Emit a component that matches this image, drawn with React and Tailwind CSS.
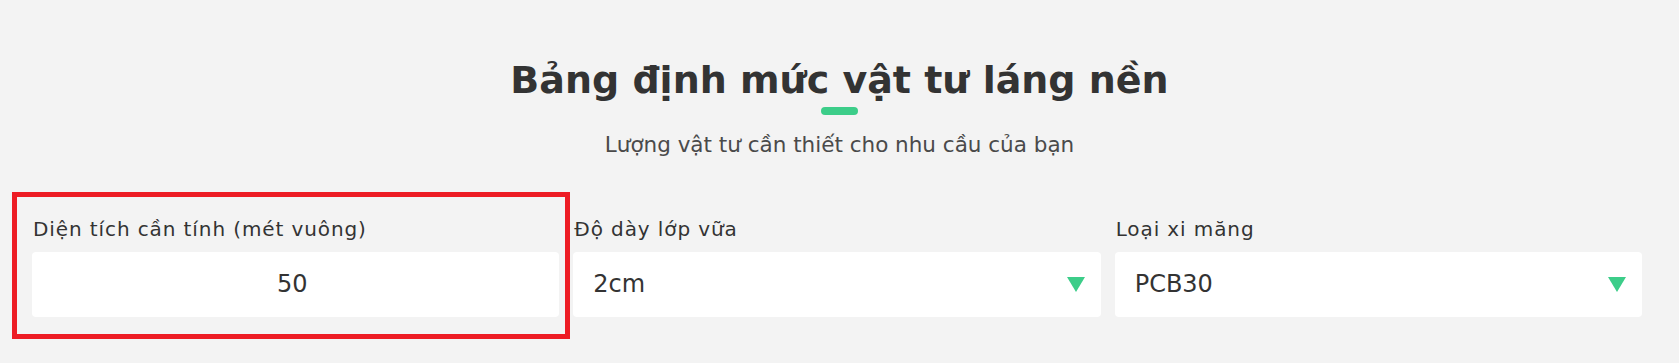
const Field = ({ label, children, highlight }) => {
  return (
    <div className="relative">
      {highlight && (
        <div className="pointer-events-none absolute -left-[20px] -top-[27px] -right-[11px] -bottom-[22px] border-[5px] border-[#ed1c24]" />
      )}
      <label className="block text-[20px] leading-none tracking-[0.045em] text-[#333] pl-[1px]">
        {label}
      </label>
      <div className="mt-[13px]">{children}</div>
    </div>
  );
};

const Caret = () => (
  <svg width="18" height="15" viewBox="0 0 18 15" className="shrink-0">
    <polygon points="0,0 18,0 9,15" fill="#3ccd89" />
  </svg>
);

const SelectBox = ({ value }) => (
  <div className="flex h-[65px] items-center justify-between rounded-[4px] bg-white pl-[20px] pr-[16px]">
    <span className="text-[24px] text-[#333]">{value}</span>
    <Caret />
  </div>
);

const App = () => {
  return (
    <div className="h-[363px] w-full overflow-hidden bg-[#f3f3f3] font-['DejaVu_Sans',sans-serif] pt-[61px]">
      <div className="flex flex-col items-center">
        <h2 className="text-[38px] font-bold leading-none text-[#333]">
          Bảng định mức vật tư láng nền
        </h2>
        <div className="mt-[8px] h-[8px] w-[37px] rounded-full bg-[#3ccd89]" />
        <p className="mt-[19px] text-[21.5px] leading-none text-[#4a4a4a]">
          Lượng vật tư cần thiết cho nhu cầu của bạn
        </p>
      </div>

      <div className="mt-[63px] grid grid-cols-3 gap-x-[14px] pl-[32px] pr-[37px]">
        <Field label="Diện tích cần tính (mét vuông)" highlight>
          <div className="flex h-[65px] items-center justify-center rounded-[4px] bg-white pr-[7px]">
            <span className="text-[24px] text-[#333]">50</span>
          </div>
        </Field>
        <Field label="Độ dày lớp vữa">
          <SelectBox value="2cm" />
        </Field>
        <Field label="Loại xi măng">
          <SelectBox value="PCB30" />
        </Field>
      </div>
    </div>
  );
};

export default App;
